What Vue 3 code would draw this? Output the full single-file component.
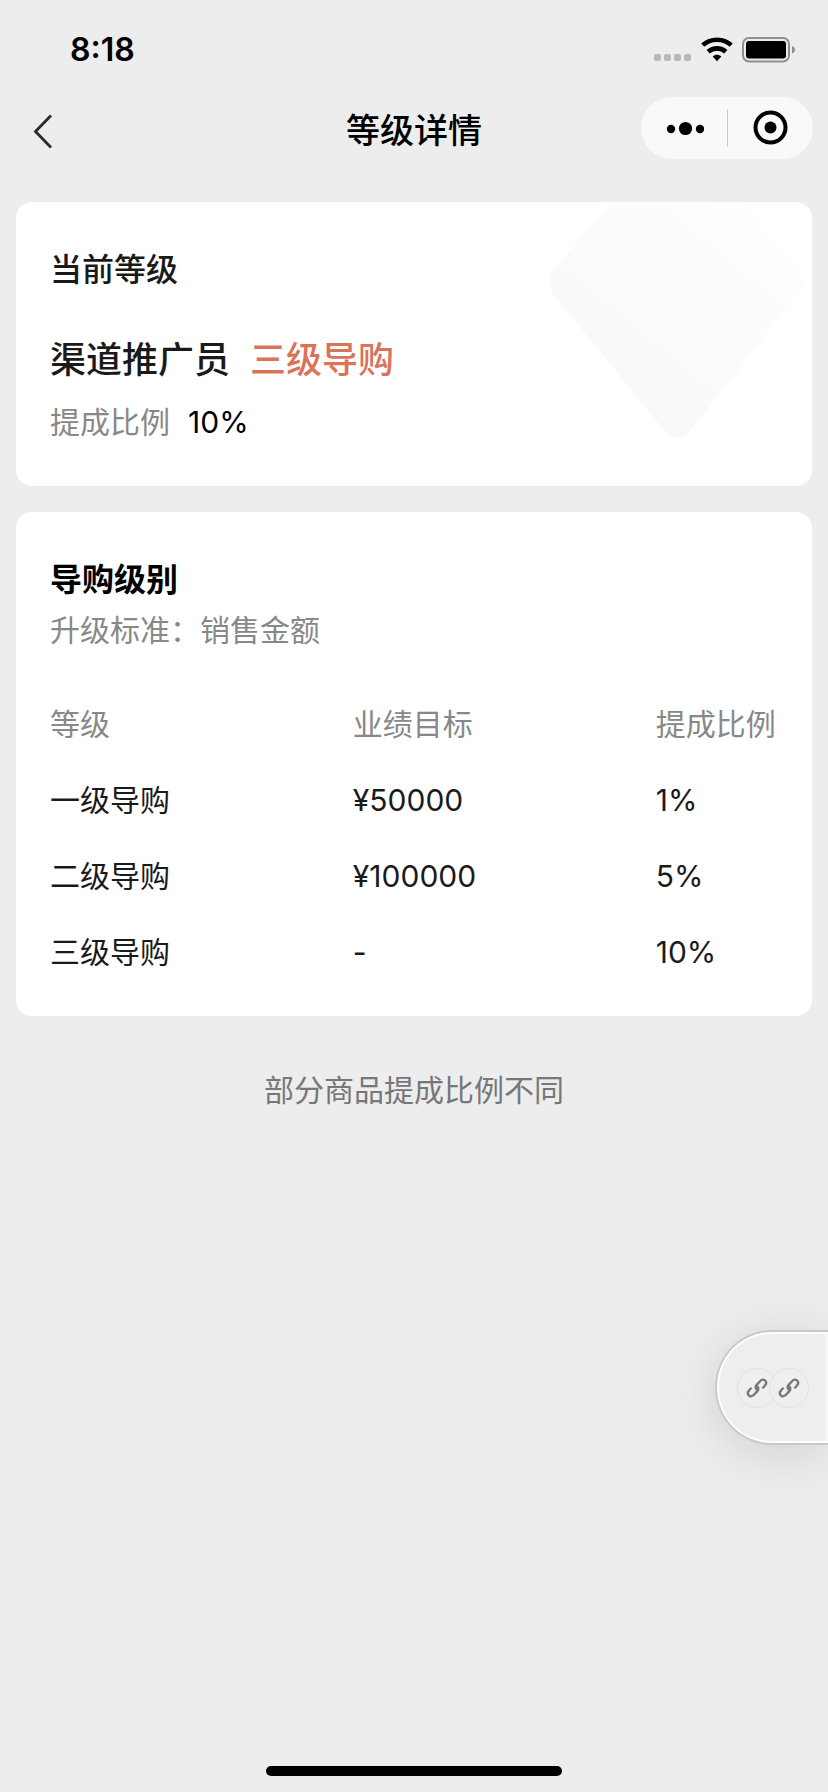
<script setup>
const levels = [
  { name: '一级导购', target: '¥50000', rate: '1%' },
  { name: '二级导购', target: '¥100000', rate: '5%' },
  { name: '三级导购', target: '-', rate: '10%' },
]
</script>

<template>
  <div class="page">
    <div class="status">
      <span class="time">8:18</span>
      <div class="status-icons">
        <svg width="38" height="26" viewBox="0 0 38 26" fill="#b9b9b9" aria-hidden="true">
          <rect x="0" y="17" width="7" height="7" rx="2" />
          <rect x="10" y="17" width="7" height="7" rx="2" />
          <rect x="20" y="17" width="7" height="7" rx="2" />
          <rect x="30" y="17" width="7" height="7" rx="2" />
        </svg>
        <svg width="32" height="26" viewBox="0 0 32 26" aria-hidden="true">
          <path d="M1.8 8.2C9.5 0.9 22.5 0.9 30.2 8.2" fill="none" stroke="#000" stroke-width="4.6" />
          <path d="M7.2 14.8C12.2 10.2 19.8 10.2 24.8 14.8" fill="none" stroke="#000" stroke-width="4.6" />
          <path d="M11.7 19.6C14.2 17.2 17.8 17.2 20.3 19.6L16 24.2Z" fill="#000" />
        </svg>
        <svg width="53" height="26" viewBox="0 0 53 26" aria-hidden="true">
          <rect x="1" y="1" width="46" height="23.5" rx="6" fill="none" stroke="#8f8f8f" stroke-width="2" />
          <rect x="4" y="4" width="40" height="17.5" rx="3" fill="#000" />
          <path d="M50 9C54 10.5 54 15 50 16.5Z" fill="#8f8f8f" />
        </svg>
      </div>
    </div>

    <header class="nav">
      <button class="back" type="button" aria-label="返回">
        <svg width="24" height="36" viewBox="0 0 24 36" aria-hidden="true">
          <path d="M21 2.5 5.500 18.500 21 34.500" fill="none" stroke="#2b2b2b" stroke-width="2.8" />
        </svg>
      </button>
      <h1 class="title">等级详情</h1>
      <div class="capsule">
        <button class="capsule-btn" type="button" aria-label="更多">
          <svg width="40" height="16" viewBox="0 0 40 16" aria-hidden="true">
            <circle cx="7" cy="9" r="4.2" />
            <circle cx="21.5" cy="8.5" r="6.6" />
            <circle cx="36" cy="9" r="4.2" />
          </svg>
        </button>
        <span class="divider"></span>
        <button class="capsule-btn" type="button" aria-label="关闭">
          <svg width="36" height="36" viewBox="0 0 36 36" aria-hidden="true">
            <circle cx="18.5" cy="17.5" r="15" fill="none" stroke="#000" stroke-width="4" />
            <circle cx="18.5" cy="17.5" r="6" />
          </svg>
        </button>
      </div>
    </header>

    <main class="main">
      <section class="card current">
        <svg class="gem" width="264" height="240" viewBox="0 0 264 240" aria-hidden="true">
          <defs>
            <linearGradient id="gem-fill" x1="60" y1="170" x2="200" y2="0" gradientUnits="userSpaceOnUse">
              <stop offset="0" stop-color="#f9f9f9" />
              <stop offset="1" stop-color="#fefefe" />
            </linearGradient>
          </defs>
          <path
            d="M4 70 Q-2 80 5 92 L116 228 Q129 242 142 229 L250 92 Q260 80 251 68 L192 0 H64 Z"
            fill="url(#gem-fill)"
          />
        </svg>
        <h2 class="heading">当前等级</h2>
        <p class="role">
          <span>渠道推广员</span>
          <span class="tag">三级导购</span>
        </p>
        <p class="ratio">
          <span class="muted">提成比例</span>
          <span>10%</span>
        </p>
      </section>

      <section class="card levels">
        <h2 class="heading strong">导购级别</h2>
        <p class="standard muted">升级标准：销售金额</p>
        <table class="table">
          <colgroup>
            <col class="col-wide" />
            <col class="col-wide" />
            <col />
          </colgroup>
          <thead>
            <tr>
              <th scope="col">等级</th>
              <th scope="col">业绩目标</th>
              <th scope="col">提成比例</th>
            </tr>
          </thead>
          <tbody>
            <tr v-for="level in levels" :key="level.name">
              <td>{{ level.name }}</td>
              <td>{{ level.target }}</td>
              <td>{{ level.rate }}</td>
            </tr>
          </tbody>
        </table>
      </section>

      <p class="note">部分商品提成比例不同</p>
    </main>

    <button class="float" type="button" aria-label="链接">
      <span v-for="n in 2" :key="n" class="bubble">
        <svg width="24" height="24" viewBox="0 0 24 24" fill="none" stroke="#777" stroke-width="2.3" aria-hidden="true">
          <path d="M13 14.5C10.5 13.5 9.8 10.8 11.6 8.9L15 5.2C16.8 3.3 19.2 3.3 20.4 4.8C21.6 6.2 21.4 8 20 9.5L17.5 12.2" />
          <path d="M11 9.5C13.5 10.5 14.2 13.2 12.4 15.1L9 18.8C7.2 20.7 4.8 20.7 3.6 19.2C2.4 17.8 2.6 16 4 14.5L6.5 11.8" />
        </svg>
      </span>
    </button>

    <div class="home-bar"></div>
  </div>
</template>

<style>
body {
  background: #ededed;
}
</style>

<style scoped>
.page {
  box-sizing: border-box;
  min-height: 100vh;
  display: flex;
  flex-direction: column;
  overflow: hidden;
  background: #ededed;
  color: #1a1a1a;
  font-family: Inter, "Noto Sans CJK SC", sans-serif;
  font-size: 30px;
  line-height: 44px;
}

h1,
h2,
p {
  margin: 0;
}

button {
  padding: 0;
  border: 0;
  background: none;
  font: inherit;
  display: flex;
  align-items: center;
  justify-content: center;
}

.status {
  display: flex;
  align-items: center;
  justify-content: space-between;
  height: 68px;
  padding: 16px 33px 0 70px;
}

.time {
  color: #000;
  font-size: 32px;
  font-weight: 600;
}

.status-icons {
  display: flex;
  gap: 9px;
}

.nav {
  display: grid;
  grid-template-columns: 1fr auto 1fr;
  align-items: center;
  height: 94px;
  padding: 0 15px 0 30px;
}

.back {
  justify-self: start;
  height: 60px;
}

.title {
  margin-right: 15px;
  color: #000;
  font-size: 34px;
  font-weight: 500;
}

.capsule {
  justify-self: end;
  display: flex;
  align-items: center;
  width: 172px;
  height: 62px;
  margin-bottom: 6px;
  border-radius: 31px;
  background: #f9f9f9;
}

.capsule-btn {
  flex: 1;
  height: 100%;
}

.divider {
  width: 1px;
  height: 38px;
  background: #c8c8c8;
}

.main {
  display: flex;
  flex: 1;
  flex-direction: column;
  gap: 26px;
  padding: 24px 16px;
}

.card {
  position: relative;
  padding: 46px 34px 42px;
  border-radius: 16px;
  background: #fff;
  overflow: hidden;
}

.gem {
  position: absolute;
  top: 0;
  right: 0;
}

.heading {
  position: relative;
  font-size: 32px;
  font-weight: 500;
}

.strong {
  color: #000;
  font-weight: 600;
}

.role {
  position: relative;
  display: flex;
  gap: 20px;
  margin-top: 46px;
  font-size: 36px;
  font-weight: 500;
}

.tag {
  color: #d9735a;
}

.ratio {
  position: relative;
  display: flex;
  gap: 18px;
  margin-top: 18px;
  color: #000;
}

.muted {
  color: #888;
}

.levels {
  padding-bottom: 26px;
}

.standard {
  margin-top: 6px;
}

.table {
  width: 100%;
  margin-top: 34px;
  table-layout: fixed;
  border-collapse: collapse;
}

.col-wide {
  width: 41.6%;
}

.table th,
.table td {
  height: 76px;
  padding: 0;
  text-align: left;
  font-weight: 400;
  white-space: nowrap;
}

.table th {
  color: #888;
}

.note {
  margin-top: 26px;
  color: #777;
  text-align: center;
}

.float {
  position: fixed;
  right: 0;
  bottom: 347px;
  box-sizing: border-box;
  width: 113px;
  height: 115px;
  border: 2px solid #c9c9c9;
  border-right: 0;
  border-radius: 57px 0 0 57px;
  background: #eee;
  box-shadow: inset 2px 0 1px #fff, inset 0 2px 1px #fff, inset 0 -2px 1px #fff, inset -3px 0 0 #f5f5f5, 0 8px 50px rgba(0, 0, 0, 0.12);
}

.bubble {
  display: flex;
  flex: none;
  align-items: center;
  justify-content: center;
  box-sizing: border-box;
  width: 40px;
  height: 40px;
  border: 1px solid #e2e2e2;
  border-radius: 50%;
  background: #efefef;
}

.bubble + .bubble {
  margin-left: -8px;
}

.home-bar {
  align-self: center;
  width: 296px;
  height: 10px;
  margin-bottom: 16px;
  border-radius: 5px;
  background: #000;
}
</style>
